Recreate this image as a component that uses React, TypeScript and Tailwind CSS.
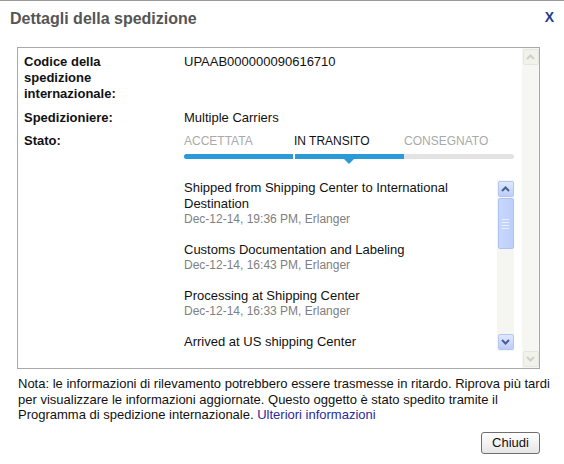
import React from 'react';

const events = [
	{ title: 'Shipped from Shipping Center to International Destination', date: 'Dec-12-14, 19:36 PM, Erlanger' },
	{ title: 'Customs Documentation and Labeling', date: 'Dec-12-14, 16:43 PM, Erlanger' },
	{ title: 'Processing at Shipping Center', date: 'Dec-12-14, 16:33 PM, Erlanger' },
	{ title: 'Arrived at US shipping Center', date: 'Dec-12-14, 15:10 PM, Erlanger' },
];

function Chevron({ up, color }: { up?: boolean; color: string }) {
	return (
		<svg width="9" height="6" viewBox="0 0 9 6">
			<path
				d={up ? 'M1 5 L4.5 1.5 L8 5' : 'M1 1 L4.5 4.5 L8 1'}
				fill="none"
				stroke={color}
				strokeWidth="2"
			/>
		</svg>
	);
}

function ScrollButton({ up, disabled }: { up?: boolean; disabled?: boolean }) {
	return (
		<div
			className={
				disabled
					? 'w-[16px] h-[16px] flex items-center justify-center rounded-[2px] border border-[#e6e6e0] bg-[#f2f2ec]'
					: 'w-[16px] h-[16px] flex items-center justify-center rounded-[2px] border border-[#b4c7f4] bg-gradient-to-b from-[#dfe8ff] to-[#bccdf9]'
			}
		>
			<Chevron up={up} color={disabled ? '#d0d0cc' : '#4a5f8c'} />
		</div>
	);
}

export default function App() {
	return (
		<div className="w-[564px] h-[464px] bg-white border-t border-[#9a9a9a] relative font-['Liberation_Sans',Arial,sans-serif] text-[#111]">
			<div className="pl-[10px] pt-[8px]">
				<h2 className="text-[16px] leading-[20px] font-bold text-[#555]">Dettagli della spedizione</h2>
			</div>
			<div className="absolute right-[10px] top-[6px] text-[14px] font-bold text-[#1d3d8f]">X</div>

			<div className="ml-[17px] mt-[18px] w-[523px] h-[322px] border border-[#a9a9a9] flex">
				<div className="flex-1 pl-[6px] pt-[6px]">
					<div className="flex">
						<div className="w-[160px] pr-[20px] text-[13px] leading-[16px] font-bold">
							Codice della spedizione internazionale:
						</div>
						<div className="text-[13px] leading-[16px]">UPAAB000000090616710</div>
					</div>
					<div className="flex mt-[8px]">
						<div className="w-[160px] text-[13px] leading-[16px] font-bold">Spedizioniere:</div>
						<div className="text-[13px] leading-[16px]">Multiple Carriers</div>
					</div>
					<div className="flex mt-[7px]">
						<div className="w-[160px] text-[13px] leading-[16px] font-bold">Stato:</div>
						<div className="w-[330px]">
							<div className="grid grid-cols-3 text-[12px] leading-[16px]">
								<span className="text-[#aaa]">ACCETTATA</span>
								<span className="text-[#111]">IN TRANSITO</span>
								<span className="text-[#aaa]">CONSEGNATO</span>
							</div>
							<div className="mt-[5px] h-[5px] rounded-full bg-[#e3e3e3] flex overflow-hidden">
								<div className="w-[109px] bg-[#2b9ad8]" />
								<div className="w-[2px] bg-white" />
								<div className="w-[109px] bg-[#2b9ad8]" />
							</div>
							<div className="pl-[160px] h-[5px] flex">
								<svg width="10" height="5" viewBox="0 0 10 5">
									<path d="M0 0 L10 0 L5 5 Z" fill="#2b9ad8" />
								</svg>
							</div>

							<div className="mt-[16px] h-[171px] flex overflow-hidden">
								<div className="flex-1 flex flex-col gap-[15px] pr-[8px]">
									{events.map((e) => (
										<div key={e.title}>
											<div className="text-[13px] leading-[16px] text-[#111]">{e.title}</div>
											<div className="text-[12px] leading-[15px] text-[#808080]">{e.date}</div>
										</div>
									))}
								</div>
								<div className="w-[17px] bg-[#f5f5f1] flex flex-col items-center py-[1px]">
									<ScrollButton up />
									<div className="mt-[1px] w-[16px] h-[51px] rounded-[2px] border border-[#aec2f2] bg-gradient-to-r from-[#c9d8fc] to-[#bccefa] flex flex-col items-center justify-center gap-[2px]">
										<div className="w-[7px] h-px bg-[#e9efff]" />
										<div className="w-[7px] h-px bg-[#e9efff]" />
										<div className="w-[7px] h-px bg-[#e9efff]" />
										<div className="w-[7px] h-px bg-[#e9efff]" />
									</div>
									<div className="flex-1" />
									<ScrollButton />
								</div>
							</div>
						</div>
					</div>
				</div>
				<div className="w-[17px] bg-[#f6f6f2] flex flex-col items-center py-[1px]">
					<ScrollButton up disabled />
					<div className="flex-1" />
					<ScrollButton disabled />
				</div>
			</div>

			<p className="mt-[7px] pl-[18px] pr-[6px] text-[13px] leading-[15.5px] text-[#111]">
				Nota: le informazioni di rilevamento potrebbero essere trasmesse in ritardo. Riprova più tardi
				per visualizzare le informazioni aggiornate. Questo oggetto è stato spedito tramite il Programma
				di spedizione internazionale. <span className="text-[#2a2a9c]">Ulteriori informazioni</span>
			</p>

			<div className="flex justify-end pr-[24px] mt-[9px]">
				<button className="w-[59px] h-[22px] rounded-[3px] border border-[#6f6f6f] bg-gradient-to-b from-white to-[#e6e6e6] text-[13px] leading-[20px] text-[#111]">
					Chiudi
				</button>
			</div>
		</div>
	);
}
